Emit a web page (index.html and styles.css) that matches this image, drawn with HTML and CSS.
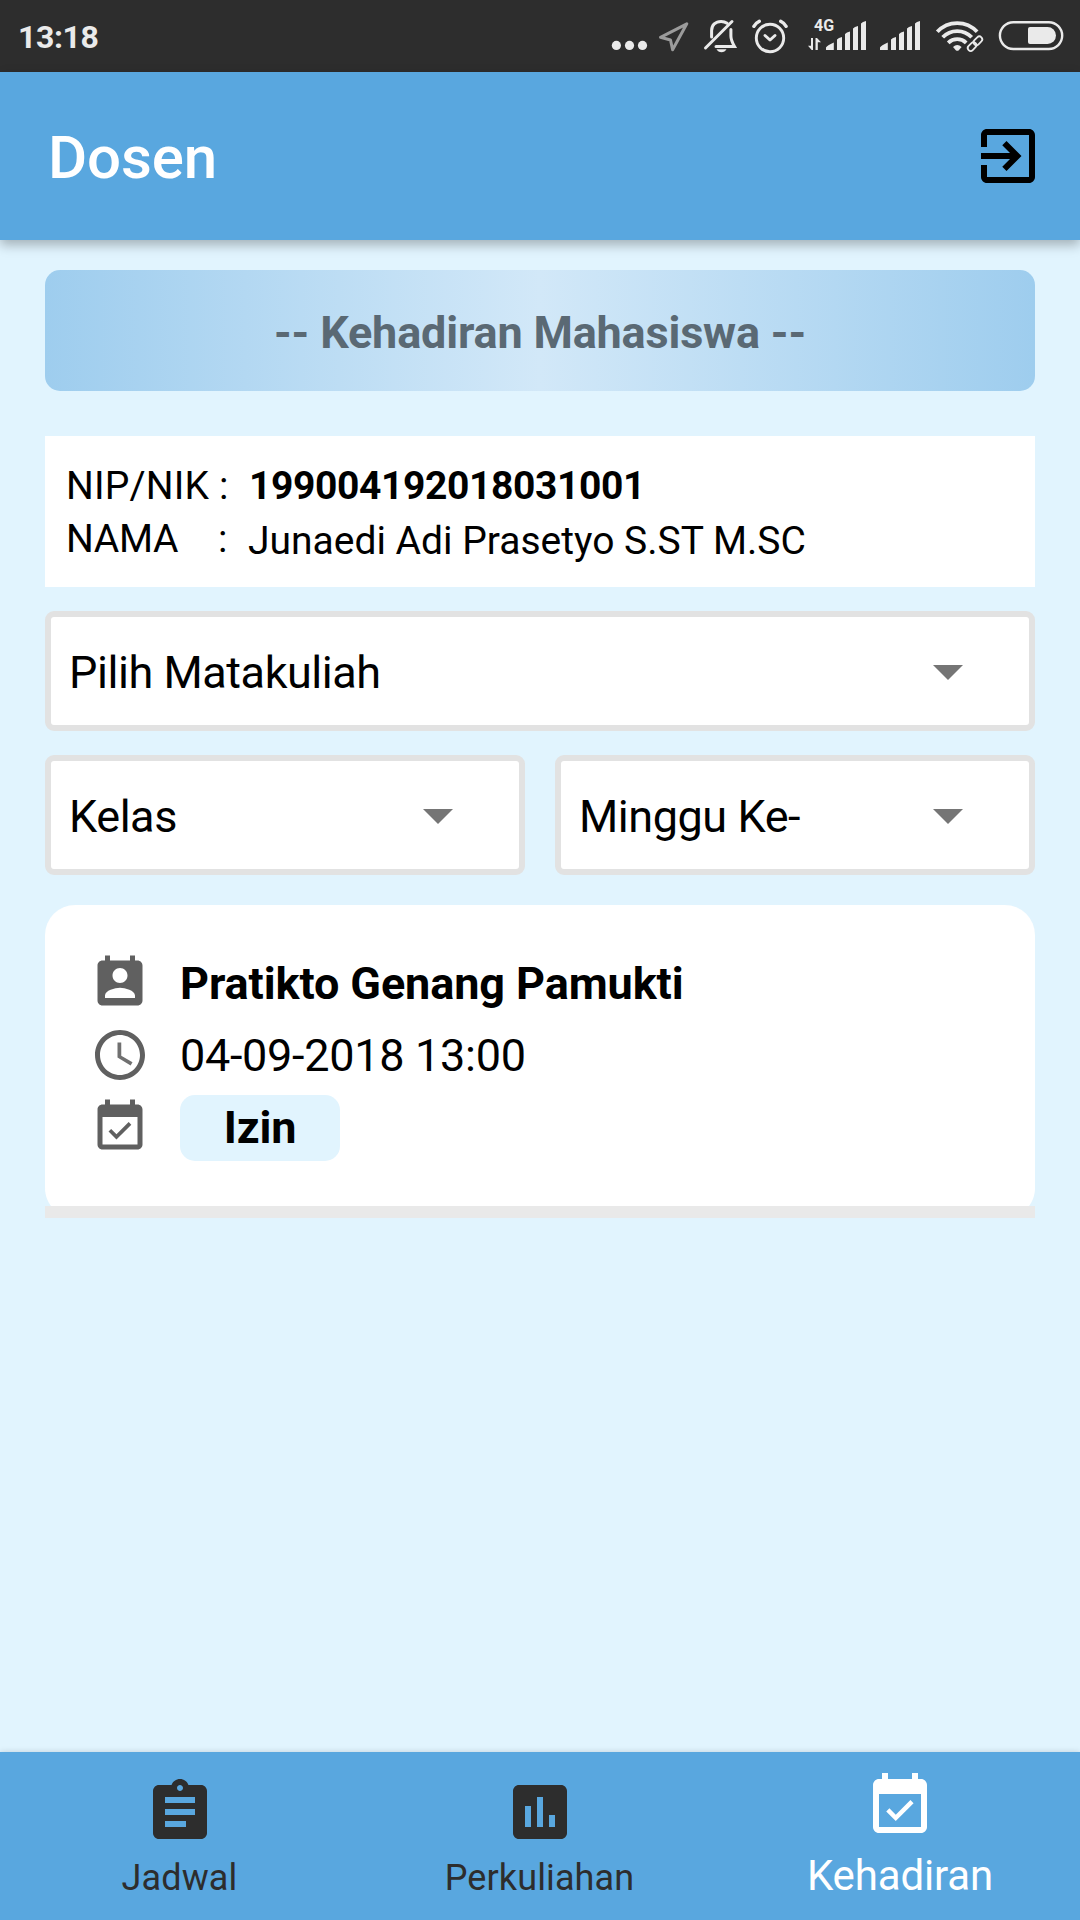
FILE: index.html
```html
<!DOCTYPE html>
<html lang="id">
<head>
<meta charset="utf-8">
<title>Dosen</title>
<link rel="stylesheet" href="styles.css">
</head>
<body>
<div class="screen">
  <div class="status">
    <span class="clock">13:18</span>
    <div class="status-icons">
      <svg width="50" height="72" viewBox="605 0 50 72"><g fill="#eaeaea"><circle cx="616.4" cy="45.4" r="4.6"/><circle cx="629.5" cy="45.4" r="4.6"/><circle cx="642.5" cy="45.4" r="4.6"/></g></svg>
      <svg width="45" height="72" viewBox="655 0 45 72"><path d="M686.8 23.8 660.5 37.3l10 2.7 2.1 9.8z" fill="none" stroke="#9b9b9b" stroke-width="3" stroke-linejoin="round"/></svg>
      <svg width="45" height="72" viewBox="700 0 45 72"><g fill="none" stroke="#eaeaea" stroke-width="3" stroke-linecap="round"><path d="M705.5 48 732 21.5"/><path d="M711.6 37v-6.500c0-5.500 3.900-9.100 9.500-9.100 2.400 0 4.400.7 6 1.900M730.900 29.500v6.500c0 3.500 1.300 6.500 3.600 10.500H716"/></g><path d="M716.500 49.300h10c-1 1.800-2.900 2.900-5 2.900s-4-1.100-5-2.900z" fill="#eaeaea"/></svg>
      <svg width="55" height="72" viewBox="745 0 55 72"><g fill="none" stroke="#eaeaea" stroke-width="2.900" stroke-linecap="round" stroke-linejoin="round"><circle cx="770" cy="38" r="13.700"/><path d="m765 35.500 5 4.500 5-4.500" stroke-width="3"/><path d="M753.900 26.300q2-3.300 5.400-5M786.100 26.300q-2-3.300-5.400-5" stroke-width="3.400"/></g></svg>
      <svg width="70" height="72" viewBox="800 0 70 72"><g fill="#eaeaea"><text class="network" x="814" y="31.200">4G</text><path d="M813 38v12h-1.300L808 45.800h3V38zM815.500 50V38h1.500l4 4.300h-3.200V50z"/><path d="M826 50v-2.500q1-2 7.800-5V50zM837 50V39.500q1.500-2 5-2.500v13zM845 50V34q1.500-2 5-2.500V50zM853 50V28.500q1.500-2 5-2.500v24zM861 50V23.500q1.500-2 5-2.500v29z"/></g></svg>
      <svg width="60" height="72" viewBox="816 0 60 72"><path fill="#eaeaea" d="M826 50v-2.500q1-2 7.800-5V50zM837 50V39.500q1.500-2 5-2.500v13zM845 50V34q1.500-2 5-2.500V50zM853 50V28.500q1.500-2 5-2.500v24zM861 50V23.500q1.500-2 5-2.500v29z"/></svg>
      <svg width="60" height="72" viewBox="930 0 60 72"><g fill="none" stroke="#eaeaea" stroke-width="3.800"><path d="M937.300 31.800a27 27 0 0 1 39.800 0M942.700 37.300a20 20 0 0 1 29 0M948.200 42.800a13 13 0 0 1 18 0"/></g><path d="M953 47q4.200-3.800 8.600 0l-2.800 3.300q-1.500 1-3 0z" fill="#eaeaea"/><g fill="none" stroke="#2d2d2d" stroke-width="5" transform="rotate(-45 975 43.700)"><rect x="966.500" y="41" width="8.500" height="5.600" rx="2.800"/><rect x="975" y="41" width="8.500" height="5.600" rx="2.800"/></g><g fill="none" stroke="#eaeaea" stroke-width="1.800" transform="rotate(-45 975 43.700)"><rect x="966" y="40.800" width="9.800" height="5.800" rx="2.900"/><rect x="974.200" y="40.800" width="9.800" height="5.800" rx="2.900"/></g></svg>
      <svg width="90" height="72" viewBox="990 0 90 72"><rect x="999.900" y="22.200" width="62.300" height="26.800" rx="13.400" fill="none" stroke="#eaeaea" stroke-width="2.400"/><path d="M1030 27h17.500a8.500 8.500 0 0 1 0 17H1030a2 2 0 0 1-2-2V29a2 2 0 0 1 2-2z" fill="#eaeaea"/></svg>
    </div>
  </div>

  <header class="appbar">
    <h1>Dosen</h1>
    <svg class="logout" viewBox="0 0 24 24"><path d="M10.090 15.590L11.500 17l5-5-5-5-1.410 1.410L12.670 11H3v2h9.670l-2.580 2.590zM19 3H5c-1.110 0-2 .9-2 2v4h2V5h14v14H5v-4H3v4c0 1.100.89 2 2 2h14c1.100 0 2-.9 2-2V5c0-1.100-.9-2-2-2z"/></svg>
  </header>

  <main class="content">
    <div class="banner">-- Kehadiran Mahasiswa --</div>

    <div class="info">
      <span class="label-nip">NIP/NIK</span><span>:</span><b>199004192018031001</b>
      <span class="label-name">NAMA</span><span class="colon-name">:</span><span class="name">Junaedi Adi Prasetyo S.ST M.SC</span>
    </div>

    <div class="filters">
      <div class="select wide">Pilih Matakuliah<i class="arrow"></i></div>
      <div class="select">Kelas<i class="arrow"></i></div>
      <div class="select">Minggu Ke-<i class="arrow"></i></div>
    </div>

    <article class="card">
      <div class="row">
        <svg class="icon" viewBox="0 0 24 24"><path d="M19 3h-1V1h-2v2H8V1H6v2H5c-1.110 0-2 .9-2 2v14c0 1.100.89 2 2 2h14c1.100 0 2-.9 2-2V5c0-1.100-.9-2-2-2zm-7 3c1.660 0 3 1.340 3 3s-1.340 3-3 3-3-1.340-3-3 1.340-3 3-3zm6 12H6v-1c0-2 4-3.100 6-3.100s6 1.100 6 3.100v1z"/></svg>
        <b class="student">Pratikto Genang Pamukti</b>
      </div>
      <div class="row">
        <svg class="icon" viewBox="0 0 24 24"><path d="M11.990 2C6.470 2 2 6.480 2 12s4.470 10 9.990 10C17.520 22 22 17.520 22 12S17.520 2 11.990 2zM12 20c-4.420 0-8-3.580-8-8s3.580-8 8-8 8 3.580 8 8-3.580 8-8 8z"/><path fill-opacity=".9" d="M12.500 7H11v6l5.250 3.150.75-1.230-4.500-2.670z"/></svg>
        <span class="date">04-09-2018 13:00</span>
      </div>
      <div class="row">
        <svg class="icon" viewBox="0 0 24 24"><path d="M16.530 11.060L15.470 10l-4.880 4.880-2.120-2.120-1.060 1.060L10.590 17l5.940-5.940zM19 3h-1V1h-2v2H8V1H6v2H5c-1.110 0-1.990.9-1.990 2L3 19c0 1.100.89 2 2 2h14c1.100 0 2-.9 2-2V5c0-1.100-.9-2-2-2zm0 16H5V8h14v11z"/></svg>
        <b class="badge">Izin</b>
      </div>
    </article>
  </main>

  <nav class="tabs">
    <div class="tab">
      <svg viewBox="0 0 24 24"><path d="M19 3h-4.180C14.400 1.840 13.300 1 12 1c-1.300 0-2.400.84-2.820 2H5c-1.100 0-2 .9-2 2v14c0 1.100.9 2 2 2h14c1.100 0 2-.9 2-2V5c0-1.100-.9-2-2-2zm-7 0c.55 0 1 .45 1 1s-.45 1-1 1-1-.45-1-1 .45-1 1-1zm2 14H7v-2h7v2zm3-4H7v-2h10v2zm0-4H7V7h10v2z"/></svg>
      <span>Jadwal</span>
    </div>
    <div class="tab">
      <svg viewBox="0 0 24 24"><path d="M19 3H5c-1.100 0-2 .9-2 2v14c0 1.100.9 2 2 2h14c1.100 0 2-.9 2-2V5c0-1.100-.9-2-2-2zM9 17H7v-7h2v7zm4 0h-2V7h2v10zm4 0h-2v-4h2v4z"/></svg>
      <span>Perkuliahan</span>
    </div>
    <div class="tab active">
      <svg viewBox="0 0 24 24"><path d="M16.530 11.060L15.470 10l-4.880 4.880-2.120-2.120-1.060 1.060L10.590 17l5.940-5.940zM19 3h-1V1h-2v2H8V1H6v2H5c-1.110 0-1.990.9-1.990 2L3 19c0 1.100.89 2 2 2h14c1.100 0 2-.9 2-2V5c0-1.100-.9-2-2-2zm0 16H5V8h14v11z"/></svg>
      <span>Kehadiran</span>
    </div>
  </nav>
</div>
</body>
</html>
```
FILE: styles.css
```css
* { box-sizing: border-box; }
body { margin: 0; }
svg { display: block; flex: none; }

.screen {
  width: 1080px;
  height: 1920px;
  display: flex;
  flex-direction: column;
  background: #e1f4fe;
  color: #000;
  font-family: Roboto, sans-serif;
  font-size: 45px;
  overflow: hidden;
}

.status {
  height: 72px;
  flex: none;
  display: flex;
  justify-content: space-between;
  background: #2d2d2d;
}
.clock {
  padding-left: 18px;
  font-size: 32px;
  font-weight: 700;
  letter-spacing: -.4px;
  line-height: 74px;
  color: #eaeaea;
}
.status-icons { display: flex; }
.network { font-size: 16px; font-weight: 700; }

.appbar {
  height: 168px;
  flex: none;
  display: flex;
  align-items: center;
  justify-content: space-between;
  padding: 0 36px 0 48px;
  background: #59a7df;
  box-shadow: 0 5px 11px rgba(0, 0, 0, .28);
}
.appbar h1 {
  margin: 0;
  padding-top: 3px;
  font-size: 60px;
  font-weight: 500;
  line-height: 70px;
  letter-spacing: -.1px;
  color: #fff;
}
.logout { width: 72px; height: 72px; }

.content { flex: 1; padding: 30px 45px 0; }

.banner {
  height: 121px;
  padding-top: 3px;
  border-radius: 15px;
  background: linear-gradient(90deg, #9ecdee, #d2e8f8 50%, #9ecdee);
  color: #5a6974;
  font-weight: 700;
  letter-spacing: -.18px;
  line-height: 120px;
  text-align: center;
}

.info {
  height: 151px;
  margin-top: 45px;
  padding: 23px 21px 0;
  display: grid;
  grid-template-columns: 153px 30px 1fr;
  grid-auto-rows: 53px;
  background: #fff;
  font-size: 39px;
  line-height: 54px;
}
.info b { letter-spacing: -.38px; }
.label-nip { letter-spacing: .15px; }
.label-name { letter-spacing: -.3px; }
.colon-name { margin-left: -1px; }
.name { padding-top: 2px; margin-left: -1px; }

.filters {
  margin-top: 24px;
  display: grid;
  grid-template-columns: 1fr 1fr;
  gap: 24px 30px;
}
.wide { grid-column: 1 / -1; }
.select {
  height: 120px;
  display: flex;
  align-items: center;
  justify-content: space-between;
  padding: 3px 66px 0 18px;
  border: 6px solid #e2e2e2;
  border-radius: 9px;
  background: #fff;
  letter-spacing: -.45px;
  line-height: 60px;
}
.arrow {
  width: 30px;
  height: 15px;
  background: #757575;
  clip-path: polygon(0 0, 100% 0, 50% 100%);
}

.card {
  height: 313px;
  margin-top: 30px;
  padding: 42px 45px 0;
  border-radius: 30px 30px 0 0;
  background:
    linear-gradient(#e9e9e9, #e9e9e9) 0 100% / 100% 12px no-repeat,
    radial-gradient(circle at 30px 0, #fff 29.500px, transparent 30.500px) 0 283px / 30px 30px no-repeat,
    radial-gradient(circle at 0 0, #fff 29.500px, transparent 30.500px) 100% 283px / 30px 30px no-repeat,
    linear-gradient(#fff, #fff) 30px 0 / 930px 100% no-repeat,
    linear-gradient(#fff, #fff) 0 0 / 100% 283px no-repeat;
}
.row {
  height: 72px;
  display: flex;
  gap: 30px;
  line-height: 74px;
}
.student { letter-spacing: -.1px; }
.date { letter-spacing: -.3px; }
.icon { width: 60px; height: 60px; margin-top: 6px; fill: #606060; }
.badge {
  width: 160px;
  height: 66px;
  margin-top: 4px;
  border-radius: 15px;
  background: #e1f4fe;
  letter-spacing: -.2px;
  line-height: 66px;
  text-align: center;
}

.tabs {
  height: 168px;
  flex: none;
  display: flex;
  background: #59a7df;
  box-shadow: 0 0 6px rgba(0, 0, 0, .15);
}
.tab {
  flex: 1;
  display: flex;
  flex-direction: column;
  align-items: center;
  padding-top: 24px;
  color: #2d2d2d;
  fill: #2d2d2d;
  font-size: 36px;
}
.tab svg { width: 72px; height: 72px; }
.tab span { line-height: 42px; margin: 9px 1px 0 0; letter-spacing: .12px; }
.tab.active { padding-top: 18px; color: #fff; fill: #fff; font-size: 42px; }
.tab.active span { line-height: 48px; margin: 10px 0 0; letter-spacing: -.15px; }
```
